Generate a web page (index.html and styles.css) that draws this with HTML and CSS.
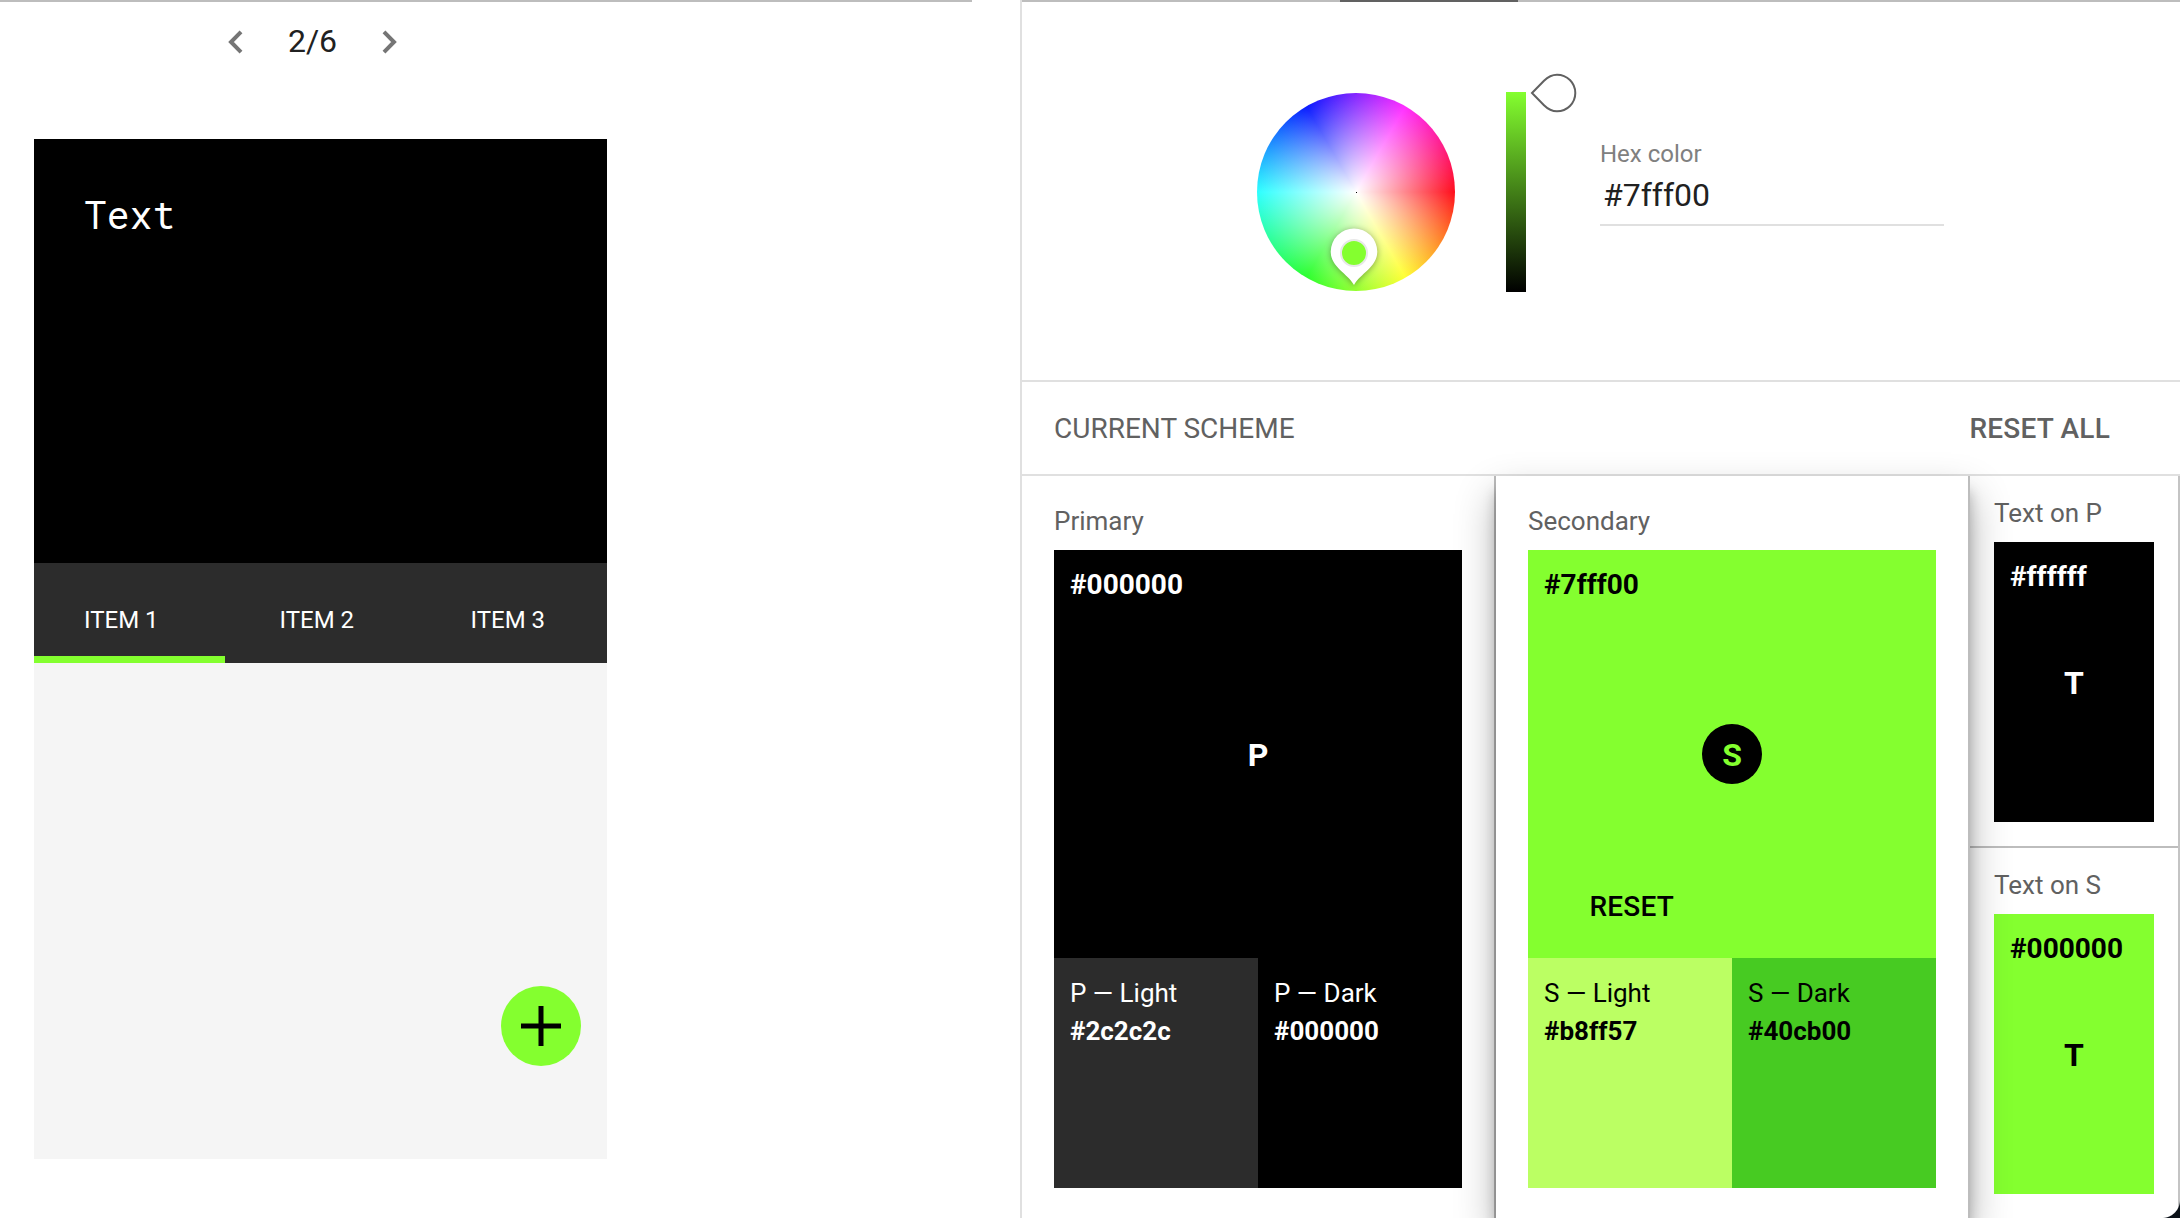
FILE: index.html
```html
<!DOCTYPE html>
<html lang="en">
<head>
<meta charset="utf-8">
<title>Color tool</title>
<link rel="stylesheet" href="styles.css">
</head>
<body>
<div class="app">
  <main class="preview">
    <nav class="pager">
      <svg class="chevron" width="15" height="24" viewBox="0 0 15 24"><path d="M13 1.8 3 12l10 10.2"/></svg>
      <span class="page-count">2/6</span>
      <svg class="chevron" width="15" height="24" viewBox="0 0 15 24"><path d="M2 1.8 12 12 2 22.2"/></svg>
    </nav>
    <section class="phone">
      <header class="phone-hero">Text</header>
      <div class="tabs">
        <div class="tab active">ITEM 1</div>
        <div class="tab">ITEM 2</div>
        <div class="tab">ITEM 3</div>
      </div>
      <div class="phone-body">
        <button class="fab" aria-label="Add"><svg width="42" height="42" viewBox="0 0 42 42"><path d="M21 1v40M1 21h40"/></svg></button>
      </div>
    </section>
  </main>

  <aside class="panel">
    <div class="panel-tabs"><span class="panel-tab-active"></span></div>
    <section class="picker">
      <div class="wheel">
        <span class="wheel-center"></span>
        <svg class="pin" width="66" height="76" viewBox="0 0 66 76">
          <path class="pin-shape" d="M33 64 C27 53 9.7 46 9.7 30.8 A23.3 23.3 0 0 1 56.3 30.8 C56.3 46 39 53 33 64Z"/>
          <circle class="pin-ring" cx="33" cy="32" r="13"/>
        </svg>
      </div>
      <div class="value-bar">
        <svg class="handle" width="48" height="42" viewBox="0 0 48 42"><path d="M2 21 14 8.8 C18 4.8 22 2.7 27 2.7 A18.3 18.3 0 0 1 27 39.3 C22 39.3 18 37.2 14 33.2Z"/></svg>
      </div>
      <div class="hex-field">
        <label class="hex-label">Hex color</label>
        <div class="hex-value">#7fff00</div>
      </div>
    </section>
    <header class="scheme-head">
      <span>CURRENT SCHEME</span>
      <span class="reset-all">RESET ALL</span>
    </header>
    <section class="scheme">
      <article class="color-card primary">
        <h2 class="card-label">Primary</h2>
        <div class="swatch on-dark black">
          <span class="hex">#000000</span>
          <span class="letter">P</span>
        </div>
        <div class="shades on-dark">
          <div class="shade p-light"><span>P — Light</span><b>#2c2c2c</b></div>
          <div class="shade black"><span>P — Dark</span><b>#000000</b></div>
        </div>
      </article>
      <article class="color-card secondary">
        <h2 class="card-label">Secondary</h2>
        <div class="swatch green">
          <span class="hex">#7fff00</span>
          <span class="letter disc">S</span>
          <span class="reset">RESET</span>
        </div>
        <div class="shades">
          <div class="shade s-light"><span>S — Light</span><b>#b8ff57</b></div>
          <div class="shade s-dark"><span>S — Dark</span><b>#40cb00</b></div>
        </div>
      </article>
      <div class="text-colors">
        <article class="text-card">
          <h2 class="card-label">Text on P</h2>
          <div class="text-swatch on-dark black"><span class="hex">#ffffff</span><span class="letter">T</span></div>
        </article>
        <article class="text-card">
          <h2 class="card-label">Text on S</h2>
          <div class="text-swatch green"><span class="hex">#000000</span><span class="letter">T</span></div>
        </article>
      </div>
    </section>
  </aside>
  <span class="window-corner"></span>
</div>
</body>
</html>
```
FILE: styles.css
```css
* { box-sizing: border-box; }

body {
  margin: 0;
  background: #fff;
  font-family: Roboto, sans-serif;
  color: #000;
}

.app {
  position: relative;
  display: flex;
  width: 2180px;
  height: 1218px;
  overflow: hidden;
}

/* Preview side */
.preview {
  width: 972px;
  margin-right: 48px;
  border-top: 2px solid #bdbdbd;
}

.pager {
  display: flex;
  align-items: center;
  height: 80px;
  padding: 0 0 0 228px;
}

.chevron { fill: none; stroke: #757575; stroke-width: 4; }

.page-count {
  width: 139px;
  padding-bottom: 2px;
  text-align: center;
  font-size: 32px;
  color: #212121;
}

.phone {
  width: 573px;
  margin: 56.5px 0 0 34px;
}

.phone-hero {
  height: 424px;
  padding: 51px 50px;
  background: #000;
  color: #fff;
  font: 38px/48px "Roboto Mono", "DejaVu Sans Mono", monospace;
}

.tabs {
  display: grid;
  grid-template-columns: repeat(3, 1fr);
  height: 100.5px;
  background: #2c2c2c;
  color: #fff;
  font-size: 24px;
  line-height: 28px;
}

.tab { padding: 43px 0 0 54.5px; }
.tab.active { padding-left: 50px; border-bottom: 7px solid #84ff2f; }

.phone-body {
  display: flex;
  justify-content: flex-end;
  align-items: flex-end;
  height: 496px;
  padding: 0 26px 93px;
  background: #f5f5f5;
}

.fab {
  display: flex;
  align-items: center;
  justify-content: center;
  width: 80px;
  height: 80px;
  padding: 0;
  border: 0;
  border-radius: 50%;
  background: #84ff2f;
}

.fab svg { fill: none; stroke: #000; stroke-width: 5; }

/* Tool side */
.panel {
  display: flex;
  flex-direction: column;
  width: 1160px;
  border-left: 2px solid #e0e0e0;
}

.panel-tabs {
  flex-shrink: 0;
  height: 2px;
  padding-left: 318px;
  background: #bdbdbd;
}

.panel-tab-active {
  display: block;
  width: 178px;
  height: 2px;
  background: #616161;
}

.picker {
  display: flex;
  flex-shrink: 0;
  height: 380px;
  padding: 90px 0 0 235px;
  border-bottom: 2px solid #e0e0e0;
}

.wheel {
  position: relative;
  width: 198px;
  height: 198px;
  margin: 1px 51px 0 0;
  border-radius: 50%;
  background:
    radial-gradient(circle closest-side, #fff, rgba(255, 255, 255, 0)),
    conic-gradient(from 90deg, #ff0d1b, #ffff35, #2bff2d, #2dffff, #0a1bff, #ff2dff, #ff0d1b);
}

.wheel-center {
  position: absolute;
  left: 99px;
  top: 99px;
  width: 1px;
  height: 1px;
  background: #000;
}

.pin {
  position: absolute;
  left: 64px;
  top: 128px;
  overflow: visible;
  filter: drop-shadow(0 1px 3px rgba(0, 0, 0, .35));
}

.pin-shape { fill: #fff; }
.pin-ring { fill: #84ff2f; stroke: #e8e8e8; stroke-width: 2; }

.value-bar {
  position: relative;
  width: 20px;
  height: 200px;
  margin-right: 74px;
  background: linear-gradient(#84ff2f, #000);
}

.handle {
  position: absolute;
  left: 23.5px;
  top: -20px;
  fill: #fff;
  stroke: #616161;
  stroke-width: 2;
}

.hex-field {
  width: 344px;
  height: 134px;
  padding-top: 48px;
  border-bottom: 2px solid #e0e0e0;
}

.hex-label {
  display: block;
  font-size: 24px;
  line-height: 28px;
  color: #808080;
}

.hex-value {
  padding: 8px 0 0 3px;
  font-size: 32px;
  line-height: 38px;
  color: #212121;
}

.scheme-head {
  display: flex;
  flex-shrink: 0;
  justify-content: space-between;
  height: 94px;
  padding: 30px 70px 0 32px;
  border-bottom: 2px solid #e0e0e0;
  font-size: 28px;
  line-height: 34px;
  color: #616161;
}

.reset-all { font-weight: 500; letter-spacing: .2px; }

.scheme { display: flex; flex: 1; min-height: 0; }

.card-label {
  margin: 0;
  font-size: 26px;
  font-weight: 400;
  line-height: 30px;
  color: #616161;
}

.color-card {
  width: 474px;
  padding: 30px 32px 0;
  border-right: 2px solid #bdbdbd;
}

.color-card .card-label { height: 44px; }

.secondary {
  position: relative;
  background: #fff;
  box-shadow: 0 19px 38px rgba(0, 0, 0, .3), 0 15px 12px rgba(0, 0, 0, .22);
}

.swatch,
.text-swatch {
  display: grid;
  grid-template-rows: 1fr 60px 1fr;
  justify-items: center;
  height: 408px;
  padding: 0 16px;
}

.text-swatch { height: 280px; }

.hex {
  justify-self: start;
  padding-top: 18px;
  font-size: 28px;
  font-weight: 700;
  line-height: 34px;
}

.letter {
  width: 60px;
  font-size: 32px;
  font-weight: 700;
  line-height: 62px;
  text-align: center;
}

.disc { border-radius: 50%; background: #000; color: #84ff2f; }

.reset {
  justify-self: start;
  align-self: end;
  padding: 0 0 34px 45.5px;
  font-size: 28px;
  font-weight: 500;
  letter-spacing: .2px;
  line-height: 34px;
}

.shades { display: flex; height: 230px; }

.shade {
  display: flex;
  flex: 1;
  flex-direction: column;
  padding: 16px 16px 0;
  font-size: 26px;
  line-height: 38px;
}

.on-dark { color: #fff; }
.black { background: #000; }
.green { background: #84ff2f; }
.p-light { background: #2c2c2c; }
.s-light { background: #bbff63; }
.s-dark { background: #47cb22; }

.text-colors { width: 210px; border-right: 2px solid #c4c4c4; }

.text-card {
  height: 372px;
  padding: 22px 24px 0;
  border-bottom: 2px solid #bdbdbd;
}

.text-card .card-label { height: 44px; }

/* Rounded corner of the window frame */
.window-corner {
  position: absolute;
  right: 0;
  bottom: 0;
  width: 18px;
  height: 18px;
  background: radial-gradient(circle at 0 0, transparent 17.5px, #0b1118 18.5px);
}
```
